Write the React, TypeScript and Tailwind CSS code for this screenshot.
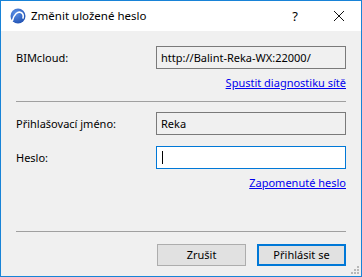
import React from "react";

const font = { fontFamily: '"Noto Sans", "Open Sans", sans-serif' };

export default function App() {
  return (
    <div
      className="w-[362px] h-[277px] border border-[#1883d7] bg-[#f0f0f0] flex flex-col text-[11px] text-black overflow-hidden relative"
      style={font}
    >
      {/* Title bar */}
      <div className="h-[30px] bg-white flex items-center shrink-0">
        <svg width="16" height="16" viewBox="0 0 16 16" className="ml-[9px]">
          <defs>
            <radialGradient id="g" cx="0.35" cy="0.3" r="0.8">
              <stop offset="0" stopColor="#5b8fe6" />
              <stop offset="1" stopColor="#1e4fb0" />
            </radialGradient>
          </defs>
          <circle cx="8" cy="8" r="7.5" fill="url(#g)" />
          <path d="M2.5 12.5 C 4 6, 8 3, 11 4.5 C 13 5.5, 13.5 8, 13 10" stroke="white" strokeWidth="1.6" fill="none" strokeLinecap="round" />
        </svg>
        <span className="ml-[5px] text-[11.5px] leading-[16px]">Změnit uložené heslo</span>
        <span className="ml-auto mr-[35px] text-[13px] leading-[16px]">?</span>
        <svg width="12" height="12" viewBox="0 0 12 12" className="mr-[16px]">
          <path d="M1 1 L11 11 M11 1 L1 11" stroke="#111" strokeWidth="1" />
        </svg>
      </div>

      {/* Content */}
      <div className="flex flex-col px-[15px]">
        <div className="flex items-center mt-[15px] h-[23px]">
          <span className="w-[140px] leading-[16px]">BIMcloud:</span>
          <div className="w-[190px] h-[23px] border border-[#7a7a7a] bg-[#f0f0f0] flex items-center pl-[4px] leading-[16px]">
            http://Balint-Reka-WX:22000/
          </div>
        </div>
        <div className="flex justify-end mt-[6px]">
          <span className="text-[#0000ee] underline leading-[16px]">Spustit diagnostiku sítě</span>
        </div>
        <div className="h-px bg-[#a0a0a0] mt-[10px]" />

        <div className="flex items-center mt-[10px] h-[23px]">
          <span className="w-[140px] leading-[16px]">Přihlašovací jméno:</span>
          <div className="w-[190px] h-[23px] border border-[#7a7a7a] bg-[#f0f0f0] flex items-center pl-[4px] leading-[16px]">
            Reka
          </div>
        </div>
        <div className="flex items-center mt-[11px] h-[23px]">
          <span className="w-[140px] leading-[16px]">Heslo:</span>
          <div className="w-[190px] h-[23px] border border-[#0078d7] bg-white flex items-center pl-[5px]">
            <div className="w-px h-[13px] bg-black" />
          </div>
        </div>
        <div className="flex justify-end mt-[6px]">
          <span className="text-[#0000ee] underline leading-[16px]">Zapomenuté heslo</span>
        </div>
        <div className="h-px bg-[#a0a0a0] mt-[40px]" />

        <div className="flex justify-end gap-[11px] mt-[12px]">
          <button className="w-[89px] h-[22px] border border-[#adadad] bg-[#e1e1e1] flex items-center justify-center leading-[16px]">
            Zrušit
          </button>
          <button className="w-[89px] h-[22px] border-2 border-[#0078d7] bg-[#e1e1e1] flex items-center justify-center leading-[16px]">
            Přihlásit se
          </button>
        </div>
      </div>

      {/* resize grip */}
      <svg width="10" height="10" viewBox="0 0 10 10" className="absolute right-[1px] bottom-[1px]">
        <rect x="7" y="1" width="2" height="2" fill="#b8b8b8" />
        <rect x="4" y="4" width="2" height="2" fill="#b8b8b8" />
        <rect x="7" y="4" width="2" height="2" fill="#b8b8b8" />
        <rect x="1" y="7" width="2" height="2" fill="#b8b8b8" />
        <rect x="4" y="7" width="2" height="2" fill="#b8b8b8" />
        <rect x="7" y="7" width="2" height="2" fill="#b8b8b8" />
      </svg>
    </div>
  );
}
